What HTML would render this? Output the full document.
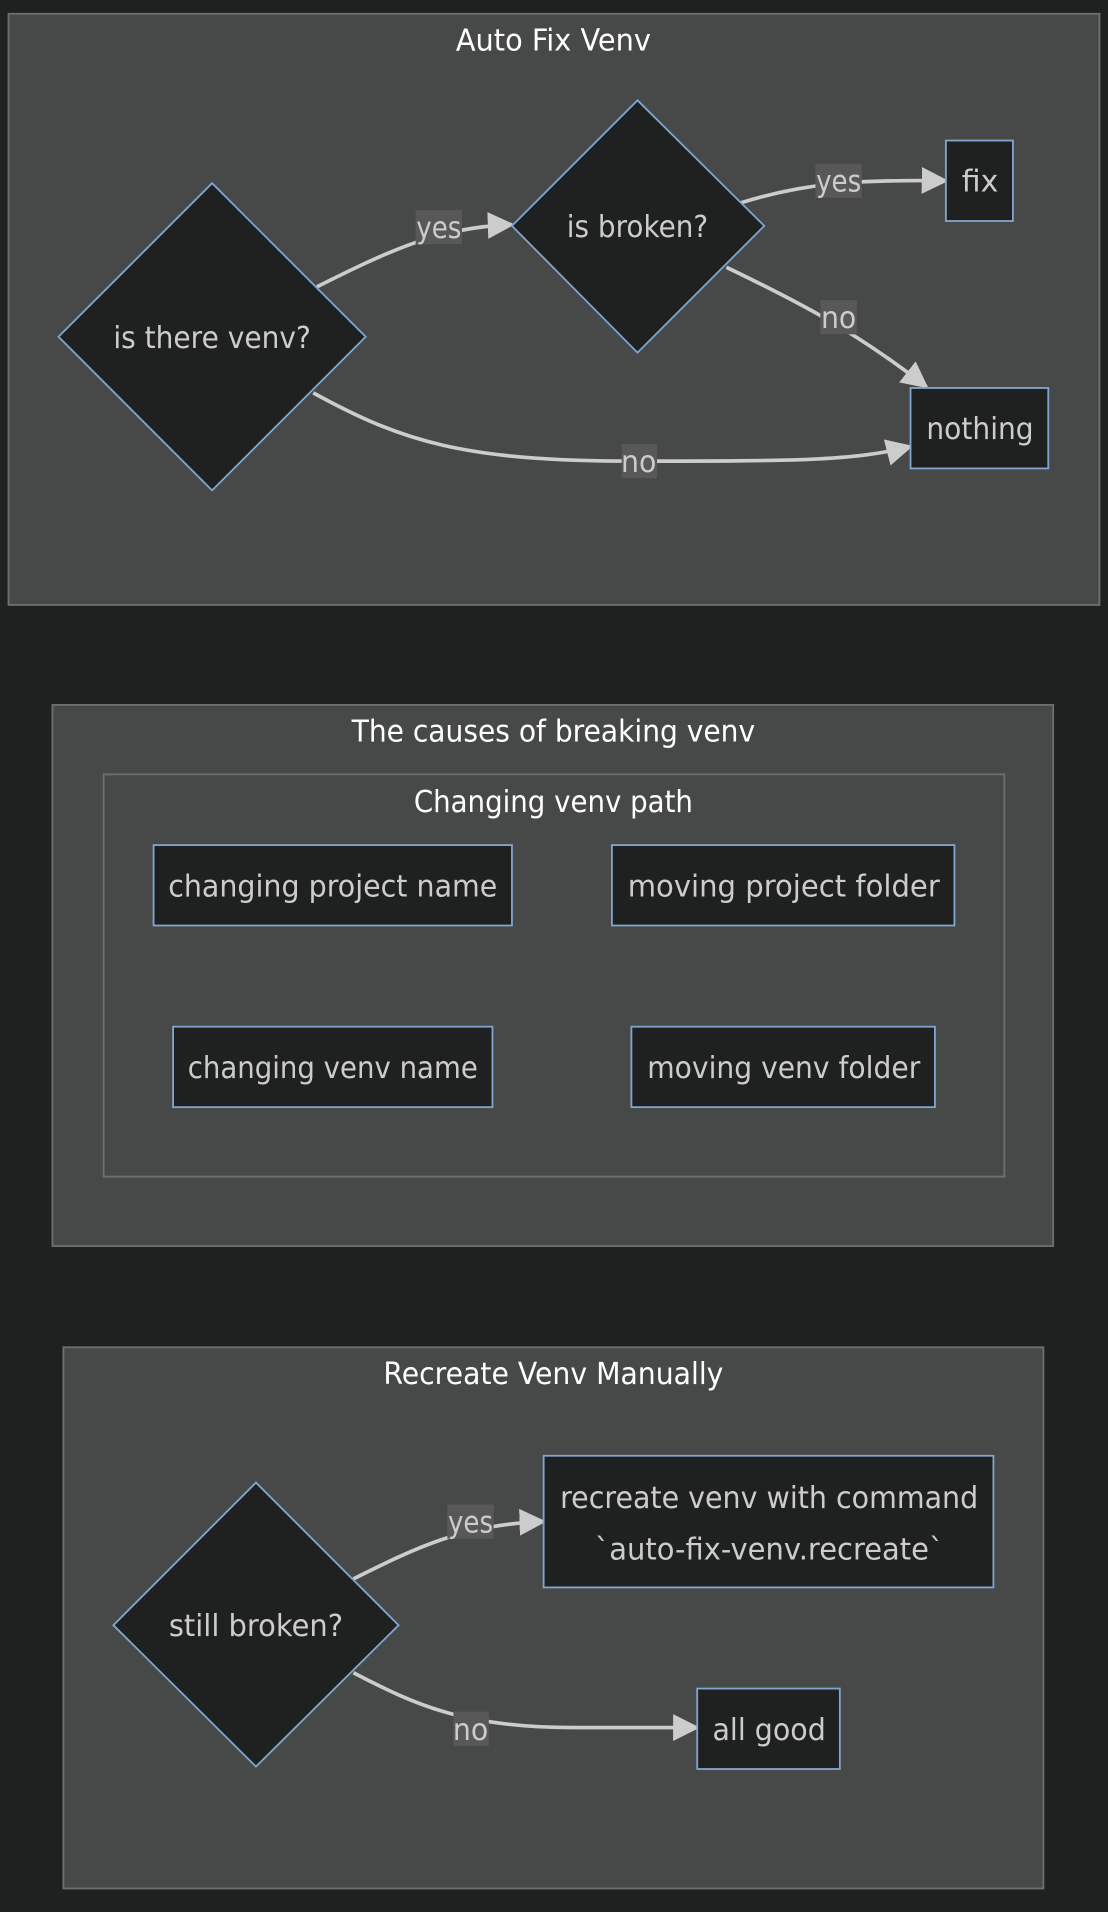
<!DOCTYPE html>
<html><head><style>html,body{margin:0;padding:0;background:#1f2020;}svg{display:block}</style></head><body>
<svg width="1108" height="1912" viewBox="0 0 909 1568" xmlns="http://www.w3.org/2000/svg" font-family="DejaVu Sans, Liberation Sans, sans-serif">
<defs><marker id="m" viewBox="0 0 10 10" refX="9" refY="5" markerWidth="22" markerHeight="22" orient="auto" markerUnits="userSpaceOnUse"><path d="M0,0L10,5L0,10z" fill="#cccccc"/></marker></defs>
<rect width="909" height="1568" fill="#1f2020"/>
<g fill="#474949" stroke="#6e6e6e" stroke-width="1.5">
<rect x="7" y="11" width="895" height="485"/>
<rect x="43" y="578" width="821" height="444"/>
<rect x="85" y="635" width="739" height="330"/>
<rect x="52" y="1105" width="804" height="444"/>
</g>
<g fill="#ffffff" font-size="25" text-anchor="middle">
<text x="454" y="41" textLength="160" lengthAdjust="spacingAndGlyphs">Auto Fix Venv</text>
<text x="454" y="608" textLength="331" lengthAdjust="spacingAndGlyphs">The causes of breaking venv</text>
<text x="454" y="666" textLength="229" lengthAdjust="spacingAndGlyphs">Changing venv path</text>
<text x="454" y="1135" textLength="279" lengthAdjust="spacingAndGlyphs">Recreate Venv Manually</text>
</g>
<g fill="none" stroke="#cccccc" stroke-width="3" marker-end="url(#m)">
<path d="M260,235 C320,205 360,186 420,184"/>
<path d="M608,166 C660,150 700,147 776,148"/>
<path d="M596,219 C650,245 700,270 760,317"/>
<path d="M257,322 C330,362 380,378 520,378 C650,378 700,378 747,366"/>
<path d="M290,1295 C340,1270 380,1250 446,1248"/>
<path d="M290,1372 C340,1398 380,1417 470,1417 L572,1417"/>
</g>
<g fill="#1f2020" stroke="#81a4cf" stroke-width="1.5">
<path d="M174,150L300,276L174,402L48,276Z"/>
<path d="M523,82L627,185L523,289L420,185Z"/>
<rect x="776" y="115" width="55" height="66"/>
<rect x="747" y="318" width="113" height="66"/>
<rect x="126" y="693" width="294" height="66"/>
<rect x="502" y="693" width="281" height="66"/>
<rect x="142" y="842" width="262" height="66"/>
<rect x="518" y="842" width="249" height="66"/>
<path d="M210,1216L327,1333L210,1449L93,1333Z"/>
<rect x="446" y="1194" width="369" height="108"/>
<rect x="572" y="1385" width="117" height="66"/>
</g>
<g fill="#585858">
<rect x="341" y="172" width="38" height="28"/>
<rect x="669" y="134" width="38" height="28"/>
<rect x="673" y="246" width="30" height="28"/>
<rect x="510" y="364" width="29" height="28"/>
<rect x="367" y="1234" width="38" height="28"/>
<rect x="372" y="1404" width="29" height="28"/>
</g>
<g fill="#cccccc" font-size="25" text-anchor="middle">
<text x="360" y="195" textLength="37" lengthAdjust="spacingAndGlyphs">yes</text>
<text x="688" y="157" textLength="37" lengthAdjust="spacingAndGlyphs">yes</text>
<text x="688" y="269" textLength="29" lengthAdjust="spacingAndGlyphs">no</text>
<text x="524" y="387" textLength="29" lengthAdjust="spacingAndGlyphs">no</text>
<text x="386" y="1257" textLength="37" lengthAdjust="spacingAndGlyphs">yes</text>
<text x="386" y="1427" textLength="29" lengthAdjust="spacingAndGlyphs">no</text>
<text x="174" y="285" textLength="162" lengthAdjust="spacingAndGlyphs">is there venv?</text>
<text x="523" y="194" textLength="116" lengthAdjust="spacingAndGlyphs">is broken?</text>
<text x="804" y="157" textLength="30" lengthAdjust="spacingAndGlyphs">fix</text>
<text x="804" y="360" textLength="88" lengthAdjust="spacingAndGlyphs">nothing</text>
<text x="273" y="735" textLength="270" lengthAdjust="spacingAndGlyphs">changing project name</text>
<text x="643" y="735" textLength="256" lengthAdjust="spacingAndGlyphs">moving project folder</text>
<text x="273" y="884" textLength="238" lengthAdjust="spacingAndGlyphs">changing venv name</text>
<text x="643" y="884" textLength="224" lengthAdjust="spacingAndGlyphs">moving venv folder</text>
<text x="210" y="1342" textLength="143" lengthAdjust="spacingAndGlyphs">still broken?</text>
<text x="631" y="1237" textLength="343" lengthAdjust="spacingAndGlyphs">recreate venv with command</text>
<text x="631" y="1279" textLength="286" lengthAdjust="spacingAndGlyphs">`auto-fix-venv.recreate`</text>
<text x="631" y="1427" textLength="93" lengthAdjust="spacingAndGlyphs">all good</text>
</g>
</svg>
</body></html>
